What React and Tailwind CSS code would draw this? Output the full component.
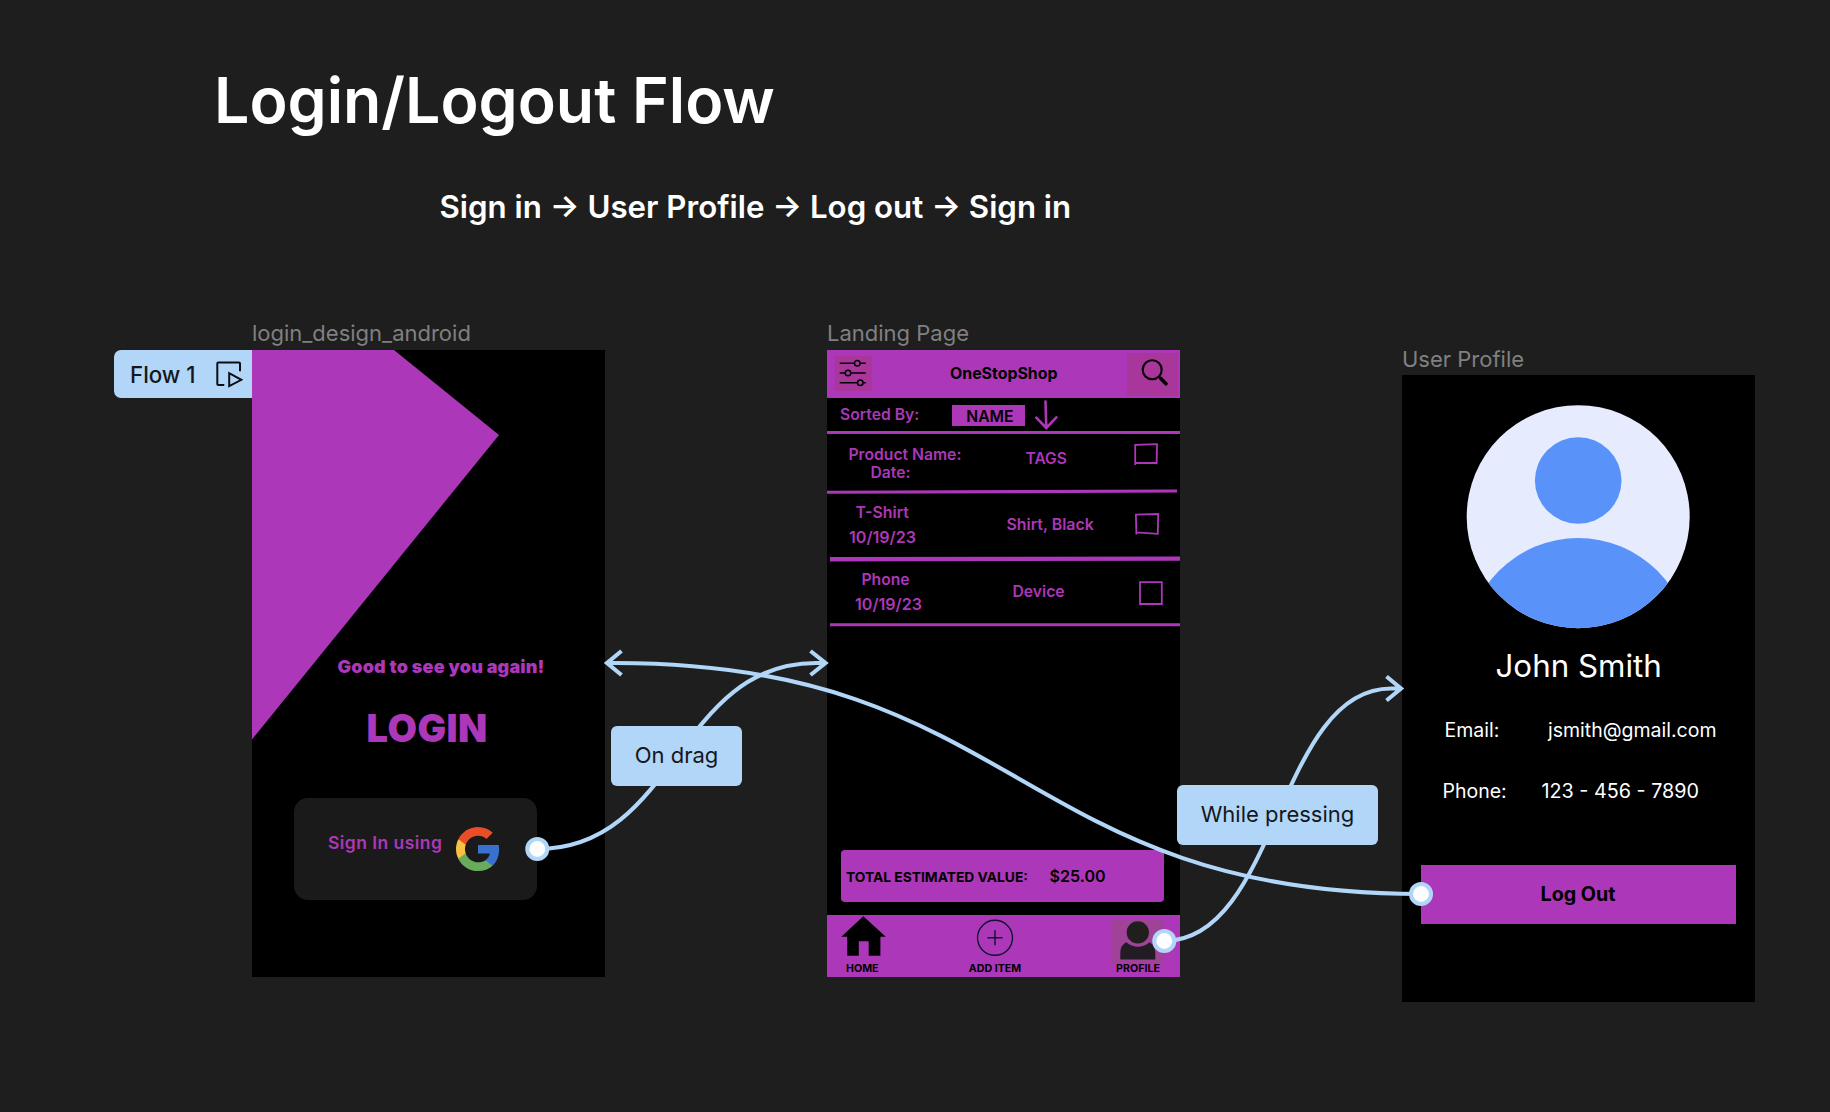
import React from "react";

const flowSteps = "Sign in → User Profile → Log out → Sign in";

function FrameLabel({ children }) {
  return (
    <div className="mb-[3px] h-7 whitespace-nowrap text-[22px] leading-7 text-[#808080]">{children}</div>
  );
}

function PlayIcon() {
  return (
    <svg className="size-7" viewBox="0 0 28 28" fill="none" stroke="#0b0f14" strokeWidth="2">
      <path d="M25 11.3V3.5a1 1 0 0 0-1-1H3.3a1 1 0 0 0-1 1V24a1 1 0 0 0 1 1h6" />
      <path d="M14.2 13.2v13L26.4 19.8z" />
    </svg>
  );
}

function GoogleLogo() {
  return (
    <svg className="size-[44px]" viewBox="1 1 22 22">
      <path fill="#3871CE" d="M22.56 12.25c0-.78-.07-1.53-.2-2.25H12v4.26h5.92c-.26 1.37-1.04 2.53-2.21 3.31v2.77h3.57c2.08-1.92 3.28-4.74 3.28-8.09z" />
      <path fill="#68AB5C" d="M12 23c2.97 0 5.46-.98 7.28-2.66l-3.57-2.77c-.98.66-2.23 1.06-3.71 1.06-2.86 0-5.29-1.93-6.16-4.53H2.18v2.84C3.99 20.53 7.7 23 12 23z" />
      <path fill="#F8C144" d="M5.84 14.09c-.22-.66-.35-1.36-.35-2.09s.13-1.43.35-2.09V7.07H2.18C1.43 8.55 1 10.22 1 12s.43 3.45 1.18 4.93l2.85-2.22.81-.62z" />
      <path fill="#EA4E27" d="M12 5.38c1.62 0 3.06.56 4.21 1.64l3.15-3.15C17.45 2.09 14.97 1 12 1 7.7 1 3.99 3.47 2.18 7.07l3.66 2.84c.87-2.6 3.3-4.53 6.16-4.53z" />
    </svg>
  );
}

function LoginFrame() {
  return (
    <div className="relative flex h-[627px] w-[353px] flex-col bg-black text-[#AC37B9]">
      <svg className="absolute left-0 top-0 h-[390px] w-[248px]" viewBox="0 0 248 390">
        <path fill="#AC37B9" d="M0 0H142L247 85L0 389.5z" />
      </svg>
      <div className="ml-[85.5px] mt-[305px] h-6 whitespace-nowrap text-[18px] font-black leading-6 tracking-[0.15px]">
        Good to see you again!
      </div>
      <div className="ml-[114.5px] mt-[29px] h-10 whitespace-nowrap text-[38px] font-black leading-10 tracking-[0.5px]">
        LOGIN
      </div>
      <div className="ml-[42px] mt-[50px] flex h-[102px] w-[243px] items-start rounded-[14px] bg-[#1A1A1A]">
        <span className="ml-[34px] mt-[33px] w-[127.5px] whitespace-nowrap text-[17.5px] font-semibold leading-6 tracking-[0.45px]">
          Sign In using
        </span>
        <div className="mt-[29px]">
          <GoogleLogo />
        </div>
      </div>
    </div>
  );
}

function FilterIcon() {
  return (
    <svg className="h-[35px] w-[37px]" viewBox="0 0 37 35" fill="#A8369B" stroke="#000" strokeWidth="1.5">
      <path d="M4.7 7.3H30.7M4.7 17H30.7M4.7 26.7H30.7" />
      <circle cx="22.3" cy="7.3" r="2.8" />
      <circle cx="13" cy="17" r="2.8" />
      <circle cx="25.3" cy="26.8" r="2.8" />
    </svg>
  );
}

function SearchIcon() {
  return (
    <svg className="h-[43px] w-[51px]" viewBox="0 0 51 43" fill="none" stroke="#000">
      <circle cx="25.2" cy="16.8" r="9.5" strokeWidth="2.1" />
      <path d="M31.8 23.4L34 25.7" strokeWidth="2.1" />
      <path d="M33.8 25.4L39 30.8" strokeWidth="3.6" strokeLinecap="round" />
    </svg>
  );
}

function SortArrow() {
  return (
    <svg className="h-[32px] w-[24px]" viewBox="0 0 24 32" fill="none" stroke="#AC37B9" strokeWidth="2.6" strokeLinecap="round" strokeLinejoin="round">
      <path d="M10.5 2.5L11.3 29.2M1.3 18.7L11.3 29L21.3 18.3" />
    </svg>
  );
}

function Check({ d }) {
  return (
    <svg className="h-[26px] w-[28px]" viewBox="0 0 28 26" fill="none" stroke="#AC37B9" strokeWidth="1.8">
      <path d={d} />
    </svg>
  );
}

function Rule({ d, width = 3.1 }) {
  return (
    <svg className="h-[8px] w-[353px] shrink-0" viewBox="0 0 353 8" stroke="#AC37B9" strokeWidth={width}>
      <path d={d} />
    </svg>
  );
}

function HomeIcon() {
  return (
    <svg className="h-[41px] w-[46px]" viewBox="0 0 46 41">
      <path d="M23.3 1.3L45.8 21.8H40.4V40.7H28.7V26.2H18.8V40.7H7.2V21.8H1.3z" />
    </svg>
  );
}

function AddIcon() {
  return (
    <svg className="size-[38px]" viewBox="0 0 38 38" fill="none" stroke="#131031" strokeWidth="1.4">
      <circle cx="19" cy="18.8" r="17.5" />
      <path d="M19 11.3V26.3M11.5 18.8H26.5" />
    </svg>
  );
}

function ProfileIcon() {
  return (
    <svg className="h-[43px] w-[53px]" viewBox="0 0 53 43">
      <circle cx="26.8" cy="12.4" r="11.1" fill="#211F1D" />
      <path fill="#231C25" d="M9.3 39.5V33.2C9.3 27.7 11.5 24.1 15.4 22.3C21.5 28.2 32.5 28.2 38.4 22.3C42.2 24.1 44.3 27.7 44.3 33.2V39.5z" />
    </svg>
  );
}

function LandingFrame() {
  return (
    <div className="flex h-[627px] w-[353px] flex-col bg-black text-[15.7px] font-semibold leading-5 text-[#AC37B9]">
      <div className="flex h-[48px] items-start bg-[#AC37B9] text-black">
        <div className="ml-[8px] mt-[6px] bg-[#A8369B]">
          <FilterIcon />
        </div>
        <span className="ml-[78px] mt-[14px] w-[177px] whitespace-nowrap text-[15.9px] font-bold">OneStopShop</span>
        <div className="mt-[3px] bg-[#A8369B]">
          <SearchIcon />
        </div>
      </div>
      <div className="flex h-[33px] items-start">
        <span className="ml-[13px] mt-[7px] w-[112px] whitespace-nowrap">Sorted By:</span>
        <span className="mt-[7px] h-[21px] w-[73px] bg-[#AC37B9] pl-[14.3px] leading-[24px] text-black">NAME</span>
        <div className="ml-[10px] mt-px">
          <SortArrow />
        </div>
      </div>
      <div className="h-[3px] bg-[#AC37B9]" />
      <div className="flex h-[54px] items-start">
        <div className="ml-[21.5px] mt-[12px] flex w-[177px] flex-col leading-[18px]">
          <span>Product Name:</span>
          <span className="ml-[22px]">Date:</span>
        </div>
        <span className="mt-[15px] w-[107.5px] text-[15.5px]">TAGS</span>
        <div className="mt-[7px]">
          <Check d="M2.2 24V3.8L24 3.2L23.6 23.3M2 22L23.6 22" />
        </div>
      </div>
      <Rule d="M0 4.3L350 3" />
      <div className="flex h-[59px] items-start">
        <div className="ml-[22px] mt-[5px] flex w-[157.5px] flex-col leading-[24px]">
          <span className="ml-[6.5px] text-[15.9px]">T-Shirt</span>
          <span className="text-[16.1px]">10/19/23</span>
        </div>
        <span className="mt-[19px] w-[127.5px] text-[15.9px]">Shirt, Black</span>
        <div className="mt-[14px]">
          <Check d="M2.4 24.5L1.9 4.6L24.2 4L23.8 23.8L2 22.3" />
        </div>
      </div>
      <Rule d="M3 4.2L353 3.6" width={4.4} />
      <div className="flex h-[58px] items-start">
        <div className="ml-[28px] mt-[5px] flex w-[157.5px] flex-col leading-[24px]">
          <span className="ml-[6.5px]">Phone</span>
          <span className="text-[16.1px]">10/19/23</span>
        </div>
        <span className="mt-[19px] w-[126.5px]">Device</span>
        <div className="mt-[17px]">
          <Check d="M1 2.2H22.8V24H1z" />
        </div>
      </div>
      <Rule d="M3 3.7H353" />
      <div className="ml-[14px] mt-[221px] flex h-[52px] w-[323px] items-start rounded-[4px] bg-[#AC37B9] text-black">
        <span className="ml-[5px] mt-[17px] w-[203.5px] whitespace-nowrap text-[13.8px] font-bold">TOTAL ESTIMATED VALUE:</span>
        <span className="mt-[16px] text-[16.1px]">$25.00</span>
      </div>
      <div className="mt-auto flex h-[62px] items-start bg-[#AC37B9] text-[10.65px] font-bold leading-4 text-black">
        <div className="ml-[13px] flex w-[47px] flex-col">
          <HomeIcon />
          <span className="ml-[6px] mt-[5px]">HOME</span>
        </div>
        <div className="ml-[80px] flex w-[56px] flex-col items-center whitespace-nowrap">
          <div className="mt-[4px]">
            <AddIcon />
          </div>
          <span className="mt-[4px]">ADD ITEM</span>
        </div>
        <div className="ml-[88px] mt-[5px] flex w-[53px] flex-col items-center">
          <div className="bg-[#A04297]">
            <ProfileIcon />
          </div>
          <span className="-mt-[2px] ml-px">PROFILE</span>
        </div>
      </div>
    </div>
  );
}

function ProfileFrame() {
  return (
    <div className="flex h-[627px] w-[353px] flex-col bg-black text-[19.5px] leading-6 text-white">
      <svg className="ml-[64px] mt-[30px] size-[224px] shrink-0" viewBox="0 0 224 224">
        <clipPath id="avatar">
          <circle cx="112.2" cy="111.7" r="111.5" />
        </clipPath>
        <g clipPath="url(#avatar)">
          <rect width="224" height="224" fill="#E6EBFE" />
          <circle cx="112.2" cy="75.5" r="43.3" fill="#5992F9" />
          <circle cx="112.2" cy="245" r="112" fill="#5992F9" />
        </g>
      </svg>
      <div className="ml-[93.5px] mt-[17px] h-10 whitespace-nowrap text-[31.3px] leading-10">John Smith</div>
      <div className="mt-[32px] flex h-6 whitespace-nowrap">
        <span className="ml-[42.5px] w-[103.5px]">Email:</span>
        <span>jsmith@gmail.com</span>
      </div>
      <div className="mt-[37px] flex h-6 whitespace-nowrap">
        <span className="ml-[40.5px] w-[99px]">Phone:</span>
        <span className="text-[19.75px]">123 - 456 - 7890</span>
      </div>
      <div className="ml-[19px] mt-[62px] flex h-[59px] w-[315px] items-center justify-center bg-[#AC37B9] pb-px pr-px text-[19.7px] font-bold text-black">
        Log Out
      </div>
    </div>
  );
}

function Connectors() {
  return (
    <svg className="pointer-events-none absolute inset-0 h-[1112px] w-[1830px]" viewBox="0 0 1830 1112" fill="none" stroke="#B1D6F8" strokeWidth="4.1">
      <path d="M537.3 849C676.8 849 676.8 663 816 663H825M810.5 651L825.5 663L810.5 675" />
      <path d="M1164.3 941C1277.6 941 1277.6 688.5 1391 688.5H1400M1386.5 676.5L1401 688.5L1386.5 700.5" />
      <path d="M1421 894C1018.5 894 1018.5 663 616 663H607M621.5 651L607 663L621.5 675" />
      <g fill="#fdfdfd">
        <circle cx="537.3" cy="849" r="10" />
        <circle cx="1164.3" cy="941" r="10" />
        <circle cx="1421" cy="894" r="10" />
      </g>
    </svg>
  );
}

export default function App() {
  return (
    <div className="relative h-[1112px] w-[1830px] overflow-hidden bg-[#1E1E1E] font-['Inter',sans-serif]">
      <h1 className="absolute left-[214px] top-[60px] whitespace-nowrap text-[62.6px] font-semibold leading-[80px] text-white">
        Login/Logout Flow
      </h1>
      <p className="absolute left-[439.5px] top-[187px] whitespace-nowrap text-[31.25px] font-semibold leading-10 text-white">
        {flowSteps}
      </p>

      <div className="absolute left-[114px] top-[350px] flex h-[48px] w-[138px] items-center rounded-l-[7px] bg-[#B1D6F8]">
        <span className="ml-[16px] w-[85px] pt-px text-[22.3px] font-medium leading-7 text-[#14181c]">Flow 1</span>
        <PlayIcon />
      </div>

      <section className="absolute left-[252px] top-[319px]">
        <FrameLabel>login_design_android</FrameLabel>
        <LoginFrame />
      </section>
      <section className="absolute left-[827px] top-[319px]">
        <FrameLabel>Landing Page</FrameLabel>
        <LandingFrame />
      </section>
      <section className="absolute left-[1402px] top-[344px]">
        <div className="pt-px">
          <div className="-mb-px">
            <FrameLabel>User Profile</FrameLabel>
          </div>
        </div>
        <ProfileFrame />
      </section>

      <Connectors />
      <div className="absolute left-[611px] top-[726px] flex h-[60px] w-[131px] items-center justify-center rounded-[6px] bg-[#B1D6F8] pb-[2px] text-[22px] text-[#14181c]">
        On drag
      </div>
      <div className="absolute left-[1177px] top-[785px] flex h-[60px] w-[201px] items-center justify-center whitespace-nowrap rounded-[6px] bg-[#B1D6F8] pb-[2px] text-[22px] text-[#14181c]">
        While pressing
      </div>
    </div>
  );
}
